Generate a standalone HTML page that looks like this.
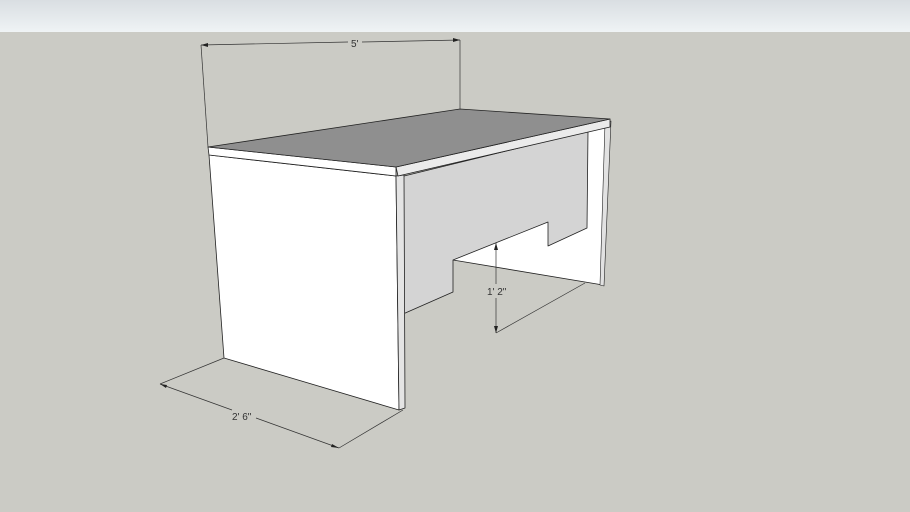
<!DOCTYPE html>
<html><head><style>
html,body{margin:0;padding:0;width:910px;height:512px;overflow:hidden;background:#cbcbc5}
</style></head><body>
<svg width="910" height="512" viewBox="0 0 910 512" xmlns="http://www.w3.org/2000/svg" style="display:block">
<defs><linearGradient id="sky" x1="0" y1="0" x2="0" y2="1"><stop offset="0" stop-color="#d9dee2"/><stop offset="1" stop-color="#eff3f5"/></linearGradient></defs>
<rect x="0" y="0" width="910" height="32" fill="url(#sky)"/>
<rect x="0" y="32" width="910" height="480" fill="#cbcbc5"/>
<g stroke="#222" stroke-width="0.8" stroke-linejoin="round">
<!-- right panel inner white -->
<polygon points="453,260 588,131 610,122 603,285" fill="#ffffff"/>
<!-- back panel -->
<polygon points="400,177 588,131 587,228 548,246 548,222 453,260 453,292 403,314" fill="#d4d4d4"/>
<!-- right panel thin edge -->
<polygon points="605,123 611,121 604,286 600,285" fill="#e2e2e2" stroke-width="0.6"/>
<!-- left panel face -->
<polygon points="209,155 396,176 399,410 224,358" fill="#ffffff"/>
<!-- left panel edge -->
<polygon points="396,176 404,175 405,408 399,410" fill="#e4e4e4"/>
<!-- top front strip -->
<polygon points="208,147 396,167 396,176 209,155" fill="#ffffff"/>
<polygon points="396,167 610,119 610,127 398,176" fill="#ebebeb"/>
<!-- top surface -->
<polygon points="208,147 460,109 610,119 396,167" fill="#8f8f8f"/>
</g>
<g stroke="#333" stroke-width="0.7" fill="none">
<line x1="201" y1="45" x2="208" y2="147"/>
<line x1="460" y1="40" x2="460" y2="109"/>
<line x1="201" y1="45" x2="348" y2="42"/>
<line x1="362" y1="42" x2="460" y2="40"/>
<line x1="224" y1="358" x2="160" y2="384"/>
<line x1="403" y1="410" x2="339" y2="448"/>
<line x1="160" y1="384" x2="232" y2="410"/>
<line x1="256" y1="418" x2="339" y2="448"/>
<line x1="496" y1="243" x2="496" y2="284"/>
<line x1="496" y1="298" x2="496" y2="333"/>
<line x1="496" y1="333" x2="585" y2="283"/>
</g>
<g fill="#222">
<polygon points="201,45 208,43 208,47"/>
<polygon points="460,40 453,38 453,42"/>
<polygon points="160,384 167,385 166,388"/>
<polygon points="339,448 332,444 331,447"/>
<polygon points="496,243 494,250 498,250"/>
<polygon points="496,333 494,326 498,326"/>
</g>
<g font-family="Liberation Sans, sans-serif" font-size="10" fill="#333">
<text x="351" y="47">5'</text>
<text x="232" y="420">2' 6"</text>
<text x="487" y="295">1' 2"</text>
</g>
</svg>
</body></html>
